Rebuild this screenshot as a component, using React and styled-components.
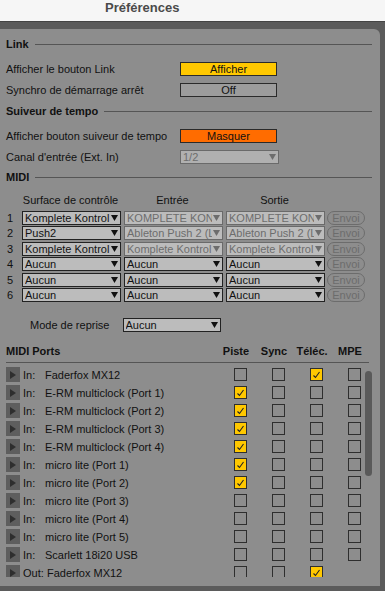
import React from 'react';
import styled, { createGlobalStyle } from 'styled-components';

const GlobalStyle = createGlobalStyle`
  html, body {
    margin: 0;
    padding: 0;
    background: #595959;
  }
  body {
    font-family: "Liberation Sans", Arial, sans-serif;
    font-size: 11px;
    color: #111;
  }
`;

const Page = styled.div`
  width: 385px;
  height: 591px;
  overflow: hidden;
  display: flex;
  flex-direction: column;
`;

const TitleBar = styled.div`
  height: 21px;
  flex: none;
  background: #f6f6f6;
  border-bottom: 1px solid #444;
  display: flex;
  align-items: center;
  padding-left: 105px;
`;

const Title = styled.h1`
  margin: 0;
  font-size: 13px;
  font-weight: bold;
  color: #4a4a4a;
  line-height: 14px;
  margin-top: -6px;
`;

const Frame = styled.div`
  flex: 1;
  min-height: 0;
  background: #5b5b5b;
  padding: 7px 5px 5px 0;
  display: flex;
`;

const Panel = styled.div`
  flex: 1;
  background: #8d8d8d;
  border-top-right-radius: 6px;
  padding: 0 8px 0 6px;
  display: flex;
  flex-direction: column;
  overflow: hidden;
`;

const Heading = styled.div`
  height: 14px;
  flex: none;
  display: flex;
  align-items: center;
  gap: 6px;
  margin-top: ${p => p.$top}px;
  font-weight: bold;
  color: #111;
  &::after {
    content: '';
    flex: 1;
    height: 1px;
    background: #555;
  }
`;

const SettingRows = styled.div`
  display: grid;
  grid-template-columns: 174px 97px;
  grid-auto-rows: 21px;
  align-items: center;
  margin-top: 7px;
`;

const Toggle = styled.div`
  height: 12px;
  border: 1px solid #2a2a2a;
  background: ${p => p.$bg || '#9c9c9c'};
  display: flex;
  align-items: center;
  justify-content: center;
  color: #111;
  line-height: 12px;
`;

const DropBox = styled.div`
  height: 12px;
  width: ${p => p.$w || 93}px;
  box-sizing: content-box;
  border: 1px solid ${p => (p.$disabled ? '#6a6a6a' : '#222')};
  background: ${p => (p.$dim ? '#b0b0b0' : '#bcbcbc')};
  color: ${p => (p.$disabled ? '#6d6d6d' : '#111')};
  display: flex;
  align-items: center;
  padding: 0 2px;
  gap: 1px;
  line-height: 12px;
`;

const DropText = styled.span`
  flex: 1;
  overflow: hidden;
  white-space: nowrap;
`;

const Arrow = ({ color }) => (
  <svg width="7" height="6" viewBox="0 0 7 6">
    <polygon points="0,0 7,0 3.5,6" fill={color} />
  </svg>
);

const Dropdown = ({ value, disabled, dim, w }) => (
  <DropBox $disabled={disabled} $dim={dim} $w={w}>
    <DropText>{value}</DropText>
    <Arrow color={disabled ? '#6d6d6d' : '#111'} />
  </DropBox>
);

const MidiGrid = styled.div`
  display: grid;
  grid-template-columns: 11px 97px 97px 97px 40px;
  column-gap: 5px;
  row-gap: 1.5px;
  margin-top: 9px;
  align-items: center;
`;

const ColHead = styled.div`
  height: 14px;
  line-height: 14px;
  text-align: center;
  margin-bottom: 2px;
`;

const Num = styled.div`
  padding-left: 1px;
  line-height: 14px;
`;

const Envoi = styled.div`
  width: 36px;
  height: 12px;
  border: 1px solid #6c6c6c;
  border-radius: 7px;
  color: #6c6c6c;
  display: flex;
  align-items: center;
  justify-content: center;
  margin-left: -1px;
`;

const ModeRow = styled.div`
  display: flex;
  align-items: center;
  margin-top: 16px;
  padding-left: 24px;
  gap: 13px;
`;

const PortsHeader = styled.div`
  display: flex;
  align-items: flex-start;
  margin-top: 12px;
  height: 18px;
  border-bottom: 1px solid #555;
  margin-right: 3px;
  font-weight: bold;
`;

const PortsTitle = styled.div`
  width: 212px;
  line-height: 14px;
`;

const Cell = styled.div`
  width: 38px;
  flex: none;
  display: flex;
  justify-content: center;
  line-height: 14px;
`;

const PortList = styled.div`
  position: relative;
  height: 210px;
  margin-top: 4px;
  overflow: hidden;
  flex: none;
`;

const PortRow = styled.div`
  display: flex;
  align-items: center;
  height: 15px;
  margin-bottom: 3px;
  margin-left: -1px;
`;

const Expander = styled.div`
  width: 15px;
  height: 15px;
  flex: none;
  background: #5e5e5e;
  display: flex;
  align-items: center;
  justify-content: center;
`;

const PortLabel = styled.div`
  width: 198px;
  flex: none;
  display: flex;
  padding-left: 3px;
  white-space: nowrap;
`;

const Dir = styled.span`
  width: ${p => (p.$out ? 24 : 22)}px;
  flex: none;
`;

const Box = styled.div`
  width: 11px;
  height: 11px;
  border: 1px solid #2e2e2e;
  background: ${p => (p.$on ? '#ffc800' : 'transparent')};
  display: flex;
  align-items: center;
  justify-content: center;
`;

const Scrollbar = styled.div`
  position: absolute;
  left: 359px;
  top: 4px;
  width: 7px;
  height: 105px;
  border-radius: 4px;
  background: #5a5a5a;
`;

const Check = ({ on }) => (
  <Box $on={on}>
    {on && (
      <svg width="9" height="8" viewBox="0 0 9 8">
        <polyline points="1.5,4.5 3.5,6.5 7.5,1" fill="none" stroke="#222" strokeWidth="1.1" />
      </svg>
    )}
  </Box>
);

const midiRows = [
  ['Komplete Kontrol', 'KOMPLETE KONTROL', 'KOMPLETE KONTROL', true],
  ['Push2', 'Ableton Push 2 (Live Port)', 'Ableton Push 2 (Live Port)', true],
  ['Komplete Kontrol', 'Komplete Kontrol DAW', 'Komplete Kontrol DAW', true],
  ['Aucun', 'Aucun', 'Aucun', false],
  ['Aucun', 'Aucun', 'Aucun', false],
  ['Aucun', 'Aucun', 'Aucun', false],
];

const ports = [
  ['In:', 'Faderfox MX12', [0, 0, 1, 0]],
  ['In:', 'E-RM multiclock (Port 1)', [1, 0, 0, 0]],
  ['In:', 'E-RM multiclock (Port 2)', [1, 0, 0, 0]],
  ['In:', 'E-RM multiclock (Port 3)', [1, 0, 0, 0]],
  ['In:', 'E-RM multiclock (Port 4)', [1, 0, 0, 0]],
  ['In:', 'micro lite (Port 1)', [1, 0, 0, 0]],
  ['In:', 'micro lite (Port 2)', [1, 0, 0, 0]],
  ['In:', 'micro lite (Port 3)', [0, 0, 0, 0]],
  ['In:', 'micro lite (Port 4)', [0, 0, 0, 0]],
  ['In:', 'micro lite (Port 5)', [0, 0, 0, 0]],
  ['In:', 'Scarlett 18i20 USB', [0, 0, 0, 0]],
  ['Out:', 'Faderfox MX12', [0, 0, 1, null]],
];

export default function App() {
  return (
    <Page>
      <GlobalStyle />
      <TitleBar>
        <Title>Préférences</Title>
      </TitleBar>
      <Frame>
        <Panel>
          <Heading $top={8}>Link</Heading>
          <SettingRows>
            <span>Afficher le bouton Link</span>
            <Toggle $bg="#ffc800">Afficher</Toggle>
            <span>Synchro de démarrage arrêt</span>
            <Toggle>Off</Toggle>
          </SettingRows>

          <Heading $top={4}>Suiveur de tempo</Heading>
          <SettingRows>
            <span>Afficher bouton suiveur de tempo</span>
            <Toggle $bg="#ff6c00">Masquer</Toggle>
            <span>Canal d'entrée (Ext. In)</span>
            <Dropdown value="1/2" disabled dim />
          </SettingRows>

          <Heading $top={3}>MIDI</Heading>
          <MidiGrid>
            <span />
            <ColHead>Surface de contrôle</ColHead>
            <ColHead>Entrée</ColHead>
            <ColHead>Sortie</ColHead>
            <span />
            {midiRows.map((r, i) => (
              <React.Fragment key={i}>
                <Num>{i + 1}</Num>
                <Dropdown value={r[0]} />
                <Dropdown value={r[1]} disabled={r[3]} />
                <Dropdown value={r[2]} disabled={r[3]} />
                <Envoi>Envoi</Envoi>
              </React.Fragment>
            ))}
          </MidiGrid>

          <ModeRow>
            <span>Mode de reprise</span>
            <Dropdown value="Aucun" w={92} />
          </ModeRow>

          <PortsHeader>
            <PortsTitle>MIDI Ports</PortsTitle>
            <Cell>Piste</Cell>
            <Cell>Sync</Cell>
            <Cell>Téléc.</Cell>
            <Cell>MPE</Cell>
          </PortsHeader>

          <PortList>
            {ports.map(([dir, name, flags], i) => (
              <PortRow key={i}>
                <Expander>
                  <svg width="6" height="8" viewBox="0 0 6 8">
                    <polygon points="0,0 6,4 0,8" fill="#2e2e2e" />
                  </svg>
                </Expander>
                <PortLabel>
                  <Dir $out={dir === 'Out:'}>{dir}</Dir>
                  <span>{name}</span>
                </PortLabel>
                {flags.map((f, j) => (
                  <Cell key={j}>{f !== null && <Check on={!!f} />}</Cell>
                ))}
              </PortRow>
            ))}
            <Scrollbar />
          </PortList>
        </Panel>
      </Frame>
    </Page>
  );
}
